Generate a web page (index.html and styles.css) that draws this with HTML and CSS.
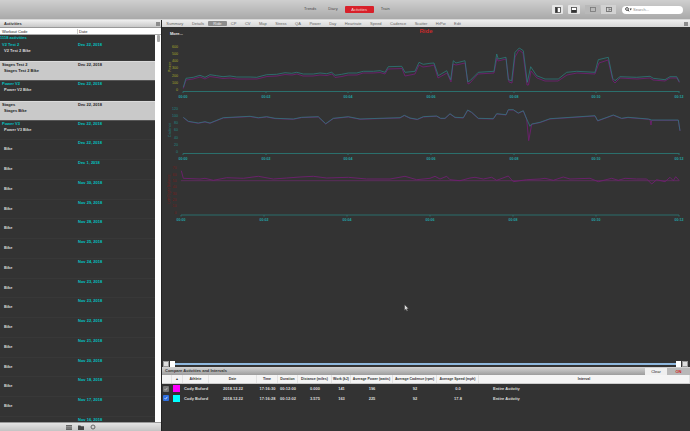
FILE: index.html
```html
<!DOCTYPE html>
<html lang="en">
<head>
    <meta charset="UTF-8">
    <title>Activities - Ride</title>
    <link rel="stylesheet" href="styles.css">
</head>
<body>
<div class="app">

    <!-- top toolbar -->
    <header class="toolbar">
        <nav class="views">
            <span class="view">Trends</span>
            <span class="view">Diary</span>
            <span class="view active">Activities</span>
            <span class="view">Train</span>
        </nav>
        <div class="tools">
            <span class="tool">
                <svg width="6" height="6" viewBox="0 0 6 6"><rect x=".5" y=".5" width="5" height="5" fill="#fff" stroke="#444" stroke-width=".8"/><rect x=".5" y=".5" width="2.2" height="5" fill="#333"/></svg>
            </span>
            <span class="tool tool-wide">
                <svg width="6" height="6" viewBox="0 0 6 6"><rect x=".5" y=".5" width="5" height="5" fill="#fff" stroke="#444" stroke-width=".8"/><rect x=".5" y="3" width="5" height="2.5" fill="#333"/></svg>
            </span>
            <span class="segment">
                <span class="seg seg-off">
                    <svg width="6" height="5" viewBox="0 0 6 5"><rect x=".5" y=".5" width="5" height="4" fill="none" stroke="#777" stroke-width=".8"/></svg>
                </span>
                <span class="seg seg-on">
                    <svg width="6" height="5" viewBox="0 0 6 5"><rect x=".5" y=".5" width="5" height="4" fill="none" stroke="#666" stroke-width=".8"/><path d="M3 .5v4M3 2.5h2.5" stroke="#666" stroke-width=".6"/></svg>
                </span>
            </span>
            <span class="search">
                <svg width="7" height="5" viewBox="0 0 7 5"><circle cx="2" cy="2" r="1.4" fill="none" stroke="#222" stroke-width=".8"/><path d="M3 3l1 1.4" stroke="#222" stroke-width=".9"/><path d="M4.6 1.6h2.2l-1.1 1.8z" fill="#333"/></svg>
                Search...
            </span>
        </div>
    </header>

    <div class="content">

        <!-- activities sidebar -->
        <aside class="sidebar">
            <div class="panel-head">
                <span>Activities</span>
                <span class="panel-btn"></span>
            </div>
            <div class="col-head">
                <span class="col-code">Workout Code</span>
                <span class="col-date">Date</span>
            </div>
            <div class="list-wrap">
                <div class="list">
                    <div class="count">1118 activities</div>
                    <div class="row"><b class="title">V2 Test 2</b><b class="date">Dec 22, 2018</b><b class="sub">V2 Test 2 Bike</b></div>
                    <div class="row light"><b class="title">Stages Test 2</b><b class="date">Dec 22, 2018</b><b class="sub">Stages Test 2 Bike</b></div>
                    <div class="row"><b class="title">Power V2</b><b class="date">Dec 22, 2018</b><b class="sub">Power V2 Bike</b></div>
                    <div class="row light"><b class="title">Stages</b><b class="date">Dec 22, 2018</b><b class="sub">Stages Bike</b></div>
                    <div class="row"><b class="title">Power V3</b><b class="date">Dec 22, 2018</b><b class="sub">Power V3 Bike</b></div>
                    <div class="row"><b class="title"></b><b class="date">Dec 22, 2018</b><b class="sub">Bike</b></div>
                    <div class="row"><b class="title"></b><b class="date">Dec 1, 2018</b><b class="sub">Bike</b></div>
                    <div class="row"><b class="title"></b><b class="date">Nov 30, 2018</b><b class="sub">Bike</b></div>
                    <div class="row"><b class="title"></b><b class="date">Nov 29, 2018</b><b class="sub">Bike</b></div>
                    <div class="row"><b class="title"></b><b class="date">Nov 28, 2018</b><b class="sub">Bike</b></div>
                    <div class="row"><b class="title"></b><b class="date">Nov 25, 2018</b><b class="sub">Bike</b></div>
                    <div class="row"><b class="title"></b><b class="date">Nov 24, 2018</b><b class="sub">Bike</b></div>
                    <div class="row"><b class="title"></b><b class="date">Nov 23, 2018</b><b class="sub">Bike</b></div>
                    <div class="row"><b class="title"></b><b class="date">Nov 23, 2018</b><b class="sub">Bike</b></div>
                    <div class="row"><b class="title"></b><b class="date">Nov 22, 2018</b><b class="sub">Bike</b></div>
                    <div class="row"><b class="title"></b><b class="date">Nov 21, 2018</b><b class="sub">Bike</b></div>
                    <div class="row"><b class="title"></b><b class="date">Nov 20, 2018</b><b class="sub">Bike</b></div>
                    <div class="row"><b class="title"></b><b class="date">Nov 18, 2018</b><b class="sub">Bike</b></div>
                    <div class="row"><b class="title"></b><b class="date">Nov 17, 2018</b><b class="sub">Bike</b></div>
                    <div class="row"><b class="title"></b><b class="date">Nov 16, 2018</b></div>
                </div>
                <div class="scrollbar"><span class="thumb"></span></div>
            </div>
            <div class="side-foot">
                <svg width="6" height="5" viewBox="0 0 6 5"><rect width="6" height="5" fill="#666"/><path d="M0 1.5h6M0 3h6" stroke="#bbb" stroke-width=".5"/></svg>
                <svg width="6" height="5" viewBox="0 0 6 5"><path d="M0 .5h2.4l.6.8H6V5H0z" fill="#444"/></svg>
                <svg width="6" height="6" viewBox="0 0 6 6"><circle cx="3" cy="3" r="2" fill="none" stroke="#666" stroke-width="1"/></svg>
            </div>
        </aside>

        <!-- ride charts and compare pane -->
        <main class="main">
            <div class="tabs">
                <span class="tab">Summary</span>
                <span class="tab">Details</span>
                <span class="tab current">Ride</span>
                <span class="tab">CP</span>
                <span class="tab">CV</span>
                <span class="tab">Map</span>
                <span class="tab">Stress</span>
                <span class="tab">QA</span>
                <span class="tab">Power</span>
                <span class="tab">Day</span>
                <span class="tab">Heartrate</span>
                <span class="tab">Speed</span>
                <span class="tab">Cadence</span>
                <span class="tab">Scatter</span>
                <span class="tab">HrPw</span>
                <span class="tab">Edit</span>
                <span class="panel-btn tabs-btn"></span>
            </div>

            <svg class="plots" viewBox="162 28 528 334" width="528" height="334">
                <text class="more" x="170" y="35.5">More...</text>
                <text class="ride-title" x="426" y="34" text-anchor="middle">Ride</text>

                <!-- power -->
                <g class="y-power" text-anchor="end">
                    <text x="178" y="48.5">600</text><text x="178" y="55.5">500</text><text x="178" y="62.8">400</text><text x="178" y="70">300</text><text x="178" y="77.5">200</text><text x="178" y="84.5">100</text><text x="178" y="91.5">0</text>
                    <text transform="translate(170.5 68) rotate(-90)" text-anchor="middle">Power</text>
                </g>
                <path class="axis" d="M183 92.5H679.5M183 92.5v1.5M266 92.5v1.5M348 92.5v1.5M431 92.5v1.5M514 92.5v1.5M596 92.5v1.5M679 92.5v1.5"/>
                <g class="x-label" text-anchor="middle">
                    <text x="183" y="99">00:00</text><text x="266" y="99">00:02</text><text x="348" y="99">00:04</text><text x="431" y="99">00:06</text><text x="514" y="99">00:08</text><text x="596" y="99">00:10</text><text x="679" y="99">00:12</text>
                </g>
                <polyline class="line-a" points="183.3,89.5 186,81 193,80 200,78 205,80 210,77.5 217,78.5 223,79.5 230,79 237,80 250,80 257,80 267,77.5 277,77 285,75.5 292,76 297,75 303,77 313,77 320,76 327,76.5 332,75 335,78.5 342,77.5 348,76 357,76 363,74 373,74 380,73.5 385,75 388,70 402,69.5 405,77 415,75 419,66 423,68 430,67 434,66 438,79 447,74 451,83 453,65 456,66 465,64 468,85 470,84 478,75 494,74 497,59 498,62 506,60 509,83 512,84 515,58 519,51 523,54 527,86 528.5,86 531,72 537,79 545,82 558,82 567,76 577,74 595,75 599,64 608,61 613,82 615,84 620,79 637,80 650,79 653,81 665,82 670,79 677,79 679.3,83.5"/>
                <polyline class="line-b" points="183.3,88.3 186,79.3 193.3,78.3 200,76.3 205,78.3 210,75.7 216.7,76.7 223,77.7 230,77 236.7,78 250,78 256.7,78.3 266.7,75.7 276.7,75.3 285,73.7 291.7,74.3 296.7,73.3 303.3,75 313.3,75 320,74 326.7,74.7 331.7,73.3 335,76.3 341.7,75.3 348.3,74 356.7,74 363.3,72.3 373.3,72.3 380,71.7 385,73.3 388.3,67.7 401.7,67.3 405,73.3 415,72.3 419,63.3 423.3,65.3 430,64.3 434,64 438.3,76.7 446.7,71.7 450.7,80.7 453.3,61.7 456,64 465,61.7 467.7,82.7 470,81.7 478.3,73.3 494,72.3 496.7,55 498.3,60 506,58.3 508.3,80.7 511.7,81.7 515,53.3 519.3,49 523.3,51.7 527.3,83.3 530.7,67.7 536.7,76.7 545,80 558.3,80 566.7,73.3 576.7,72.3 595,73.3 598.3,60.7 608.3,58.3 612.7,79.3 615,81.7 620,77.7 636.7,78.3 650,77.3 653.3,79.3 665,80.7 670,77.7 676.7,77.7 679.3,82.7"/>

                <!-- cadence -->
                <g class="y-cadence" text-anchor="end">
                    <text x="178" y="110.8">120</text><text x="178" y="118">100</text><text x="178" y="125">80</text><text x="178" y="132">60</text><text x="178" y="139.5">40</text><text x="178" y="146.5">20</text><text x="178" y="153.5">0</text>
                    <text transform="translate(170.5 131) rotate(-90)" text-anchor="middle">Cadence</text>
                </g>
                <path class="axis" d="M183 154.5H679.5M183 154.5v1.5M266 154.5v1.5M348 154.5v1.5M431 154.5v1.5M514 154.5v1.5M596 154.5v1.5M679 154.5v1.5"/>
                <g class="x-label" text-anchor="middle">
                    <text x="183" y="160.5">00:00</text><text x="266" y="160.5">00:02</text><text x="348" y="160.5">00:04</text><text x="431" y="160.5">00:06</text><text x="514" y="160.5">00:08</text><text x="596" y="160.5">00:10</text><text x="679" y="160.5">00:12</text>
                </g>
                <polyline class="line-a" points="183.3,118.6 188.3,122.6 198.3,124.3 205,123 210,124.3 223.3,119 250,117.6 258.3,119 266.7,118 275,119.6 293.3,120.3 301.7,118.6 318.3,118 325.7,125 333.3,119.6 348.3,118 360,120.3 380,119.6 400,119 404.3,116.6 410,119.3 417.3,120.6 423.3,118 430,117.6 436.7,117.3 440.7,119.6 445,119.6 450,115 455,118.6 463.3,119 467.7,111.3 471.7,113.6 478.3,119.6 493.3,120 496.7,115 506,116 508.3,111 513.3,111 518.3,114.3 523.3,112 526.7,120.3 528.7,141.7 531.7,125.3 540,123.6 550,120 595,117 597.7,122 613.3,116.3 621.7,119.6 628,118.6 648.3,120.3 650,120.5 651,126 651.7,121.3 678.3,121.3 680,132"/>
                <polyline class="line-b" points="183.3,118.3 188.3,122.3 198.3,124 205,122.7 210,124 223.3,118.7 250,117.3 258.3,118.7 266.7,117.7 275,119.3 293.3,120 301.7,118.3 318.3,117.7 325.7,124.7 333.3,119.3 348.3,117.7 360,120 380,119.3 400,118.7 404.3,116.3 410,119 417.3,120.3 423.3,117.7 430,117.3 436.7,117 440.7,119.3 445,119.3 450,114.7 455,118.3 463.3,118.7 467.7,111 471.7,113.3 478.3,119.3 493.3,119.7 496.7,114.7 506,115.7 508.3,110.7 513.3,110.7 518.3,114 523.3,111.7 526.7,120 530,127.3 531.7,125 540,123.3 550,119.7 595,116.7 597.7,121.7 613.3,116 621.7,119.3 628,118.3 648.3,120 651.7,121 678.3,121 680,131.7"/>

                <!-- left/right balance -->
                <g class="y-balance" text-anchor="end">
                    <text x="176.5" y="169.8">70</text><text x="176.5" y="176.5">60</text><text x="176.5" y="183">50</text><text x="176.5" y="189">40</text><text x="176.5" y="195.8">30</text><text x="176.5" y="202">20</text><text x="176.5" y="208">10</text><text x="176.5" y="214.8">0</text>
                    <text transform="translate(170 190) rotate(-90)" text-anchor="middle">Left/Right Balance</text>
                </g>
                <path class="balance-mid" d="M181 181.7H679"/>
                <path class="axis" d="M181 216H679M181 216v1.5M264 216v1.5M347 216v1.5M430 216v1.5M513 216v1.5M596 216v1.5M679 216v1.5"/>
                <g class="x-label" text-anchor="middle">
                    <text x="181" y="221.5">00:00</text><text x="264" y="221.5">00:02</text><text x="347" y="221.5">00:04</text><text x="430" y="221.5">00:06</text><text x="513" y="221.5">00:08</text><text x="596" y="221.5">00:10</text><text x="679" y="221.5">00:12</text>
                </g>
                <polyline class="line-a" points="181.3,171.7 183.3,179.3 200,180 205,179.3 213.3,181.3 226.7,178.7 243.3,179.3 258.3,177.3 273.3,180 286.7,179 300,178 313.3,177.3 326.7,179 348.3,178.3 366.7,180 390,180 405,177.3 416.7,180.7 430,179.3 435,177.3 440,180 446.7,177.3 450,180.7 460,181.7 470,179 475,178.3 483.3,180 491.7,178.3 496.7,181.3 508.3,177 513.3,182.7 526.7,180.7 540,180 545,179.3 553.3,181.3 563.3,178 570,180 590,179.3 598.3,182.7 611.7,179.3 618.3,181.3 625,179.3 636.7,180 646.7,180 651.7,185 656.7,180.7 665,182.7 670,178.3 673.3,181.7 675.7,177.7 679.3,181.7"/>

                <!-- mouse pointer -->
                <path class="pointer" d="M404.5 305.5v6l1.4-1.3 1 2 .9-.4-1-2h1.9z"/>
            </svg>

            <div class="slider">
                <span class="slide-btn"></span>
                <span class="slide-handle"></span>
                <span class="slide-track"></span>
                <span class="slide-handle"></span>
                <span class="slide-btn"></span>
            </div>

            <div class="compare-head">
                <b class="compare-title">Compare Activities and Intervals</b>
                <span class="compare-clear">Clear</span>
                <span class="compare-on">ON</span>
            </div>

            <div class="grid grid-head">
                <span></span>
                <span>▲</span>
                <span>Athlete</span>
                <span>Date</span>
                <span>Time</span>
                <span>Duration</span>
                <span>Distance (miles)</span>
                <span>Work (kJ)</span>
                <span>Average Power (watts)</span>
                <span>Average Cadence (rpm)</span>
                <span>Average Speed (mph)</span>
                <span>Interval</span>
            </div>
            <div class="grid grid-row">
                <span class="check check-grey"><svg width="4" height="4" viewBox="0 0 4 4"><path d="M.6 2.2l1 1L3.4.8" fill="none" stroke="#ddd" stroke-width=".7"/></svg></span>
                <span class="swatch swatch-magenta"></span>
                <span>Cody Buford</span>
                <span>2018.12.22</span>
                <span>17:16:30</span>
                <span>00:12:00</span>
                <span>0.000</span>
                <span>141</span>
                <span>196</span>
                <span>92</span>
                <span>0.0</span>
                <span class="interval">Entire Activity</span>
            </div>
            <div class="grid grid-row">
                <span class="check check-blue"><svg width="4" height="4" viewBox="0 0 4 4"><path d="M.6 2.2l1 1L3.4.8" fill="none" stroke="#fff" stroke-width=".7"/></svg></span>
                <span class="swatch swatch-cyan"></span>
                <span>Cody Buford</span>
                <span>2018.12.22</span>
                <span>17:16:28</span>
                <span>00:12:02</span>
                <span>3.575</span>
                <span>163</span>
                <span>225</span>
                <span>92</span>
                <span>17.8</span>
                <span class="interval">Entire Activity</span>
            </div>
        </main>
    </div>
</div>
</body>
</html>
```

FILE: styles.css
```css
* {
    box-sizing: border-box;
}

body {
    margin: 0;
    background-color: #333;
    font-family: "Liberation Sans", Arial, sans-serif;
    font-size: 4px;
    overflow: hidden;
}

.app {
    display: flex;
    flex-direction: column;
    width: 690px;
    height: 431px;
    overflow: hidden;
}

/* toolbar */
.toolbar {
    display: flex;
    align-items: center;
    height: 20px;
    flex: none;
    background: linear-gradient(#cfcfcf, #a9a9a9);
    border-bottom: 1px solid #d8d8d8;
}

.views {
    display: flex;
    align-items: center;
    padding-left: 298px;
    margin-top: -1px;
}

.view {
    padding: 0 6px;
    line-height: 6px;
    color: #4a4a4a;
}

.view.active {
    padding: 0 4px;
    margin: 0 1px 0 1px;
    width: 29px;
    text-align: center;
    background-color: #d8202a;
    border-radius: 1px;
    color: #f4d8d8;
    line-height: 7px;
}

.tools {
    display: flex;
    align-items: center;
    margin-left: auto;
    padding-right: 7px;
}

.tool {
    display: flex;
    align-items: center;
    justify-content: center;
    width: 11px;
    height: 9px;
    margin-right: 5px;
    background-color: #e6e6e6;
    border-radius: 1px;
}

.tool-wide {
    width: 12px;
}

.segment {
    display: flex;
    margin-right: 6px;
    gap: 1px;
}

.seg {
    display: flex;
    align-items: center;
    justify-content: center;
    height: 9px;
}

.seg-off {
    width: 15px;
    background-color: #b9b9b9;
}

.seg-on {
    width: 15px;
    background-color: #d2d2d2;
}

.search {
    display: flex;
    align-items: center;
    gap: 1px;
    width: 61px;
    height: 8px;
    padding-left: 3px;
    background-color: #fff;
    border-radius: 4px;
    color: #888;
}

/* layout */
.content {
    display: flex;
    flex: 1;
    min-height: 0;
}

.sidebar {
    display: flex;
    flex-direction: column;
    width: 161px;
    flex: none;
    background-color: #fff;
}

.main {
    display: flex;
    flex-direction: column;
    flex: 1;
    min-width: 0;
    background-color: #333;
    border-left: 1px solid #222;
}

/* sidebar */
.panel-head {
    display: flex;
    align-items: center;
    justify-content: space-between;
    height: 8px;
    flex: none;
    padding: 0 1px 0 4px;
    background: linear-gradient(#efefef, #c9c9c9);
    font-weight: bold;
    color: #333;
    border-bottom: 1px solid #999;
}

.panel-btn {
    width: 4px;
    height: 4px;
    background-color: #8c8c8c;
}

.col-head {
    display: flex;
    align-items: center;
    height: 7px;
    flex: none;
    background-color: #fff;
    color: #222;
    border-bottom: 1px solid #aaa;
}

.col-code {
    width: 78px;
    padding-left: 2px;
    border-right: 1px solid #ccc;
}

.col-date {
    padding-left: 1px;
}

.list-wrap {
    display: flex;
    flex: 1;
    min-height: 0;
}

.list {
    flex: 1;
    min-width: 0;
    overflow: hidden;
    background-color: #333;
}

.count {
    height: 6.5px;
    padding-left: 0;
    line-height: 5px;
    font-weight: bold;
    color: #00c4c4;
}

.row {
    display: grid;
    grid-template-columns: 78px 1fr;
    grid-template-rows: 6px 6px;
    height: 19.75px;
    line-height: 5.5px;
    border-bottom: 1px solid #383838;
}

.title {
    padding-left: 2px;
    color: #00c4c4;
}

.date {
    color: #00c4c4;
}

.sub {
    grid-column: 1 / 3;
    padding-left: 4px;
    color: #d8d8d8;
}

.row.light {
    background-color: #c9c9c9;
    border-top: 1px solid #dadada;
    border-bottom: 1px solid #555;
}

.row.light .title,
.row.light .date,
.row.light .sub {
    color: #222;
}

.scrollbar {
    width: 6px;
    flex: none;
    background-color: #fff;
}

.thumb {
    display: block;
    width: 3px;
    height: 7px;
    margin-left: 2px;
    background-color: #aaa;
    border-radius: 1px;
}

.side-foot {
    display: flex;
    align-items: center;
    justify-content: center;
    gap: 6px;
    height: 9px;
    flex: none;
    padding-right: 0;
    background: linear-gradient(#e4e4e4, #c4c4c4);
    border-top: 1px solid #999;
}

/* tabs */
.tabs {
    display: flex;
    align-items: center;
    height: 7px;
    flex: none;
    background: linear-gradient(#eeeeee, #d6d6d6);
    color: #666;
}

.tab {
    padding: 0 4.25px;
    line-height: 5px;
    white-space: nowrap;
}

.tab.current {
    background-color: #8d8d8d;
    color: #eee;
    border-radius: 1px;
    padding: 0 5px;
}

.tabs-btn {
    margin-left: auto;
    margin-right: 2px;
}

/* charts */
.plots {
    display: block;
    flex: none;
    font-size: 3.6px;
}

.more {
    fill: #e8e8e8;
    font-size: 4px;
    font-weight: bold;
}

.ride-title {
    fill: #c82a2a;
    font-size: 6px;
    font-weight: bold;
}

.y-power {
    fill: #a9a52a;
}

.y-cadence {
    fill: #1f8888;
}

.y-balance {
    fill: #7a1d1d;
}

.x-label {
    fill: #22a4a4;
    font-weight: bold;
}

.axis {
    fill: none;
    stroke: #2b6f6c;
    stroke-width: 1;
}

.balance-mid {
    fill: none;
    stroke: #6d2a6d;
    stroke-width: .7;
}

.line-a {
    fill: none;
    stroke: #6f1f70;
    stroke-width: .9;
}

.line-b {
    fill: none;
    stroke: #2b7d7d;
    stroke-width: .9;
    stroke-opacity: .85;
}

.pointer {
    fill: #ddd;
    stroke: #222;
    stroke-width: .4;
}

/* slider */
.slider {
    display: flex;
    align-items: center;
    gap: 1px;
    height: 6px;
    flex: none;
    padding: 0 2px 0 1px;
}

.slide-btn {
    width: 6px;
    height: 6px;
    background-color: #ddd;
    border: 1px solid #999;
}

.slide-handle {
    width: 5px;
    height: 6px;
    background-color: #fff;
}

.slide-track {
    flex: 1;
    height: 2px;
    margin: 0 -1px;
    background-color: #8fb8de;
}

/* compare pane */
.compare-head {
    display: flex;
    align-items: stretch;
    height: 8px;
    flex: none;
    background: linear-gradient(#d4d4d4, #9c9c9c);
}

.compare-title {
    flex: 1;
    padding-left: 3px;
    line-height: 7px;
    color: #333;
}

.compare-clear {
    width: 22px;
    margin-top: 1px;
    text-align: center;
    line-height: 7px;
    background-color: #efefef;
    color: #222;
}

.compare-on {
    width: 23px;
    margin-top: 1px;
    text-align: center;
    line-height: 7px;
    background-color: #b8b8b8;
    color: #d01818;
    font-weight: bold;
}

.grid {
    display: grid;
    grid-template-columns: 10px 11px 26px 48px 21px 20px 34px 19px 42px 44px 42px 1fr;
    align-items: center;
    text-align: center;
    flex: none;
}

.grid-head {
    height: 9px;
    background-color: #f4f4f4;
    color: #333;
    font-weight: bold;
    font-size: 3.5px;
    white-space: nowrap;
    border-bottom: 1px solid #ccc;
}

.grid-head span {
    height: 8px;
    line-height: 8px;
    border-right: 1px solid #e2e2e2;
}

.grid-row {
    height: 9.5px;
    color: #ddd;
    font-weight: bold;
    white-space: nowrap;
}

.interval {
    text-align: left;
    padding-left: 14px;
}

.check {
    display: flex;
    align-items: center;
    justify-content: center;
    width: 6px;
    height: 6px;
    margin-left: 1px;
    border-radius: 1px;
}

.check-grey {
    background-color: #777;
}

.check-blue {
    background-color: #2f6fe0;
}

.swatch {
    display: block;
    width: 7px;
    height: 7px;
    margin-left: 1px;
}

.swatch-magenta {
    background-color: #ff00ff;
}

.swatch-cyan {
    background-color: #00ffff;
}
```
